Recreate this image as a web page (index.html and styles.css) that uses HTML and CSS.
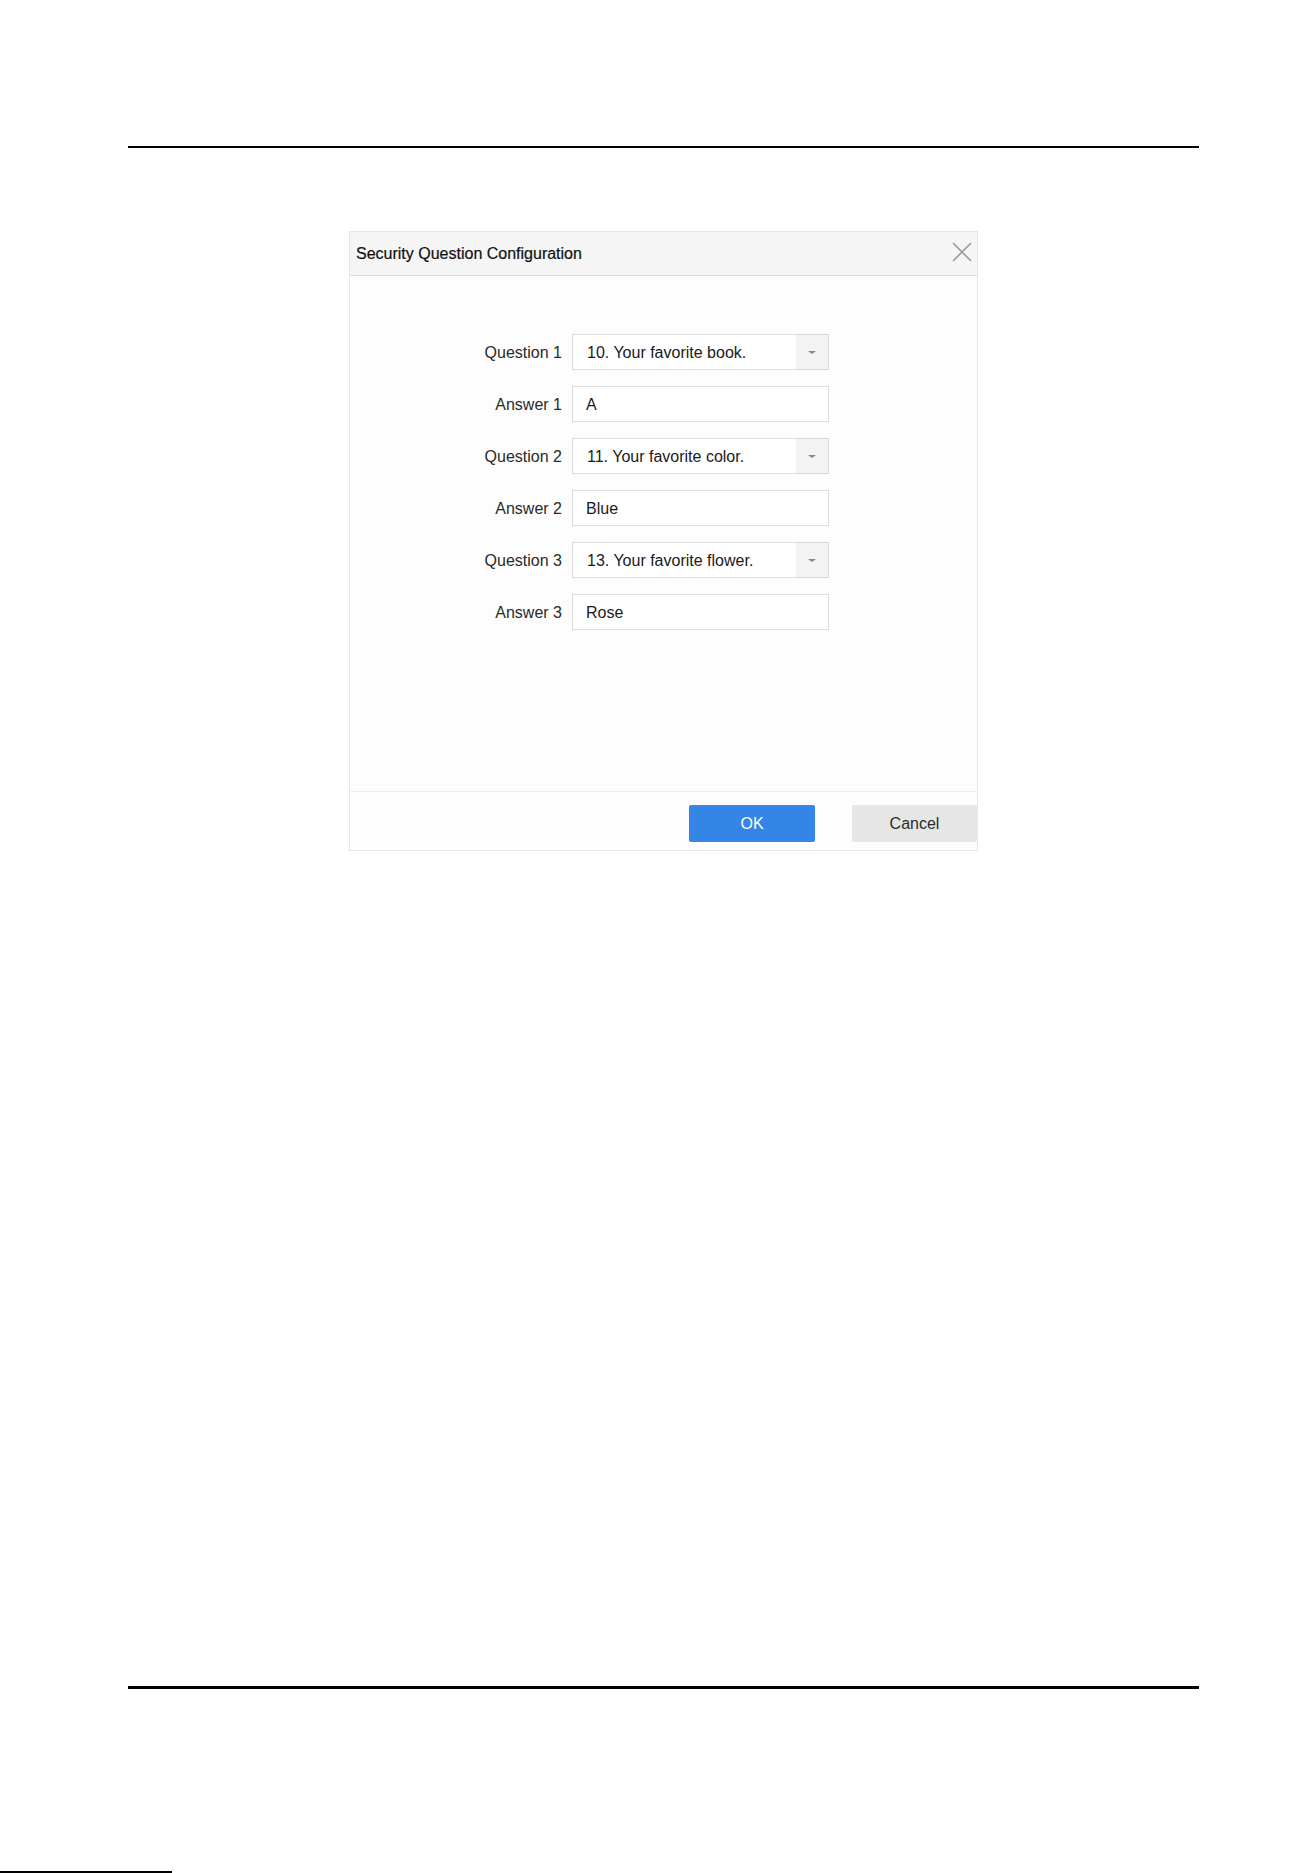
FILE: index.html
```html
<!DOCTYPE html>
<html lang="en">
<head>
<meta charset="utf-8">
<title>Security Question Configuration</title>
<link rel="stylesheet" href="styles.css">
</head>
<body>
<div class="page">
  <div class="rule rule-top"></div>
  <div class="dialog">
    <div class="dlg-header">
      <span class="dlg-title">Security Question Configuration</span>
      <svg class="dlg-close" width="20" height="20" viewBox="0 0 20 20"><path d="M1 1 L19 19 M19 1 L1 19" stroke="#9a9a9a" stroke-width="1.6" fill="none"/></svg>
    </div>
    <div class="dlg-body">
      <div class="form">
        <label class="lbl">Question 1</label>
        <div class="field select"><span class="val">10. Your favorite book.</span><span class="arrow"><i class="tri"></i></span></div>
        <label class="lbl">Answer 1</label>
        <div class="field"><span class="val">A</span></div>
        <label class="lbl">Question 2</label>
        <div class="field select"><span class="val">11. Your favorite color.</span><span class="arrow"><i class="tri"></i></span></div>
        <label class="lbl">Answer 2</label>
        <div class="field"><span class="val">Blue</span></div>
        <label class="lbl">Question 3</label>
        <div class="field select"><span class="val">13. Your favorite flower.</span><span class="arrow"><i class="tri"></i></span></div>
        <label class="lbl">Answer 3</label>
        <div class="field"><span class="val">Rose</span></div>
      </div>
    </div>
    <div class="dlg-footer">
      <button class="btn btn-ok">OK</button>
      <button class="btn btn-cancel">Cancel</button>
    </div>
  </div>
  <div class="rule rule-bottom"></div>
  <div class="edge-bar"></div>
</div>
</body>
</html>
```
FILE: styles.css
```css
html, body {
  margin: 0;
  padding: 0;
  background: #ffffff;
}
body {
  font-family: "Liberation Sans", Arial, sans-serif;
  color: #333333;
  height: 1873px;
  overflow: hidden;
}
.page {
  display: flex;
  flex-direction: column;
  height: 1873px;
}
.rule {
  background: #000000;
  margin-left: 128px;
  width: 1071px;
}
.rule-top {
  margin-top: 146px;
  height: 2px;
}
.rule-bottom {
  margin-top: 835px;
  height: 3px;
}
.dialog {
  margin-top: 83px;
  margin-left: 349px;
  width: 627px;
  height: 618px;
  border: 1px solid #e6e6e6;
  background: #fdfdfd;
  display: flex;
  flex-direction: column;
}
.dlg-header {
  height: 43px;
  background: #f5f5f5;
  border-bottom: 1px solid #dcdcdc;
  display: flex;
  align-items: center;
  justify-content: space-between;
  padding: 0 5px 0 6px;
}
.dlg-title {
  font-size: 16px;
  color: #111111;
  padding-top: 1px;
  -webkit-text-stroke: 0.2px #111111;
}
.dlg-close {
  display: block;
  margin-top: -3px;
}
.dlg-body {
  flex: 1;
  padding-top: 58px;
}
.form {
  display: grid;
  grid-template-columns: 212px 257px;
  column-gap: 10px;
  row-gap: 16px;
  grid-auto-rows: 36px;
}
.lbl {
  font-size: 16px;
  color: #2a2a2a;
  text-align: right;
  align-self: center;
  padding-top: 1px;
}
.field {
  box-sizing: border-box;
  border: 1px solid #dadada;
  background: #ffffff;
  display: flex;
  align-items: center;
  font-size: 16px;
  color: #1a1a1a;
}
.field .val {
  flex: 1;
  padding-left: 13px;
  padding-top: 1px;
}
.select .val {
  padding-left: 14px;
}
.arrow {
  width: 32px;
  align-self: stretch;
  background: #f3f3f3;
  display: flex;
  align-items: center;
  justify-content: center;
}
.tri {
  display: block;
  width: 0;
  height: 0;
  border-left: 4px solid transparent;
  border-right: 4px solid transparent;
  border-top: 3px solid #888888;
}
.dlg-footer {
  border-top: 1px solid #eeeeee;
  display: flex;
  justify-content: flex-end;
  align-items: flex-start;
  gap: 37px;
  padding-top: 13px;
  box-sizing: border-box;
  height: 59px;
}
.btn {
  width: 126px;
  height: 37px;
  border: none;
  border-radius: 2px;
  font-family: "Liberation Sans", Arial, sans-serif;
  font-size: 16px;
  padding: 0;
}
.btn-ok {
  background: #3485e5;
  color: #ffffff;
}
.btn-cancel {
  width: 125px;
  background: #e6e6e6;
  color: #2a2a2a;
}
.edge-bar {
  margin-top: auto;
  width: 172px;
  height: 2px;
  background: #000000;
}
```
